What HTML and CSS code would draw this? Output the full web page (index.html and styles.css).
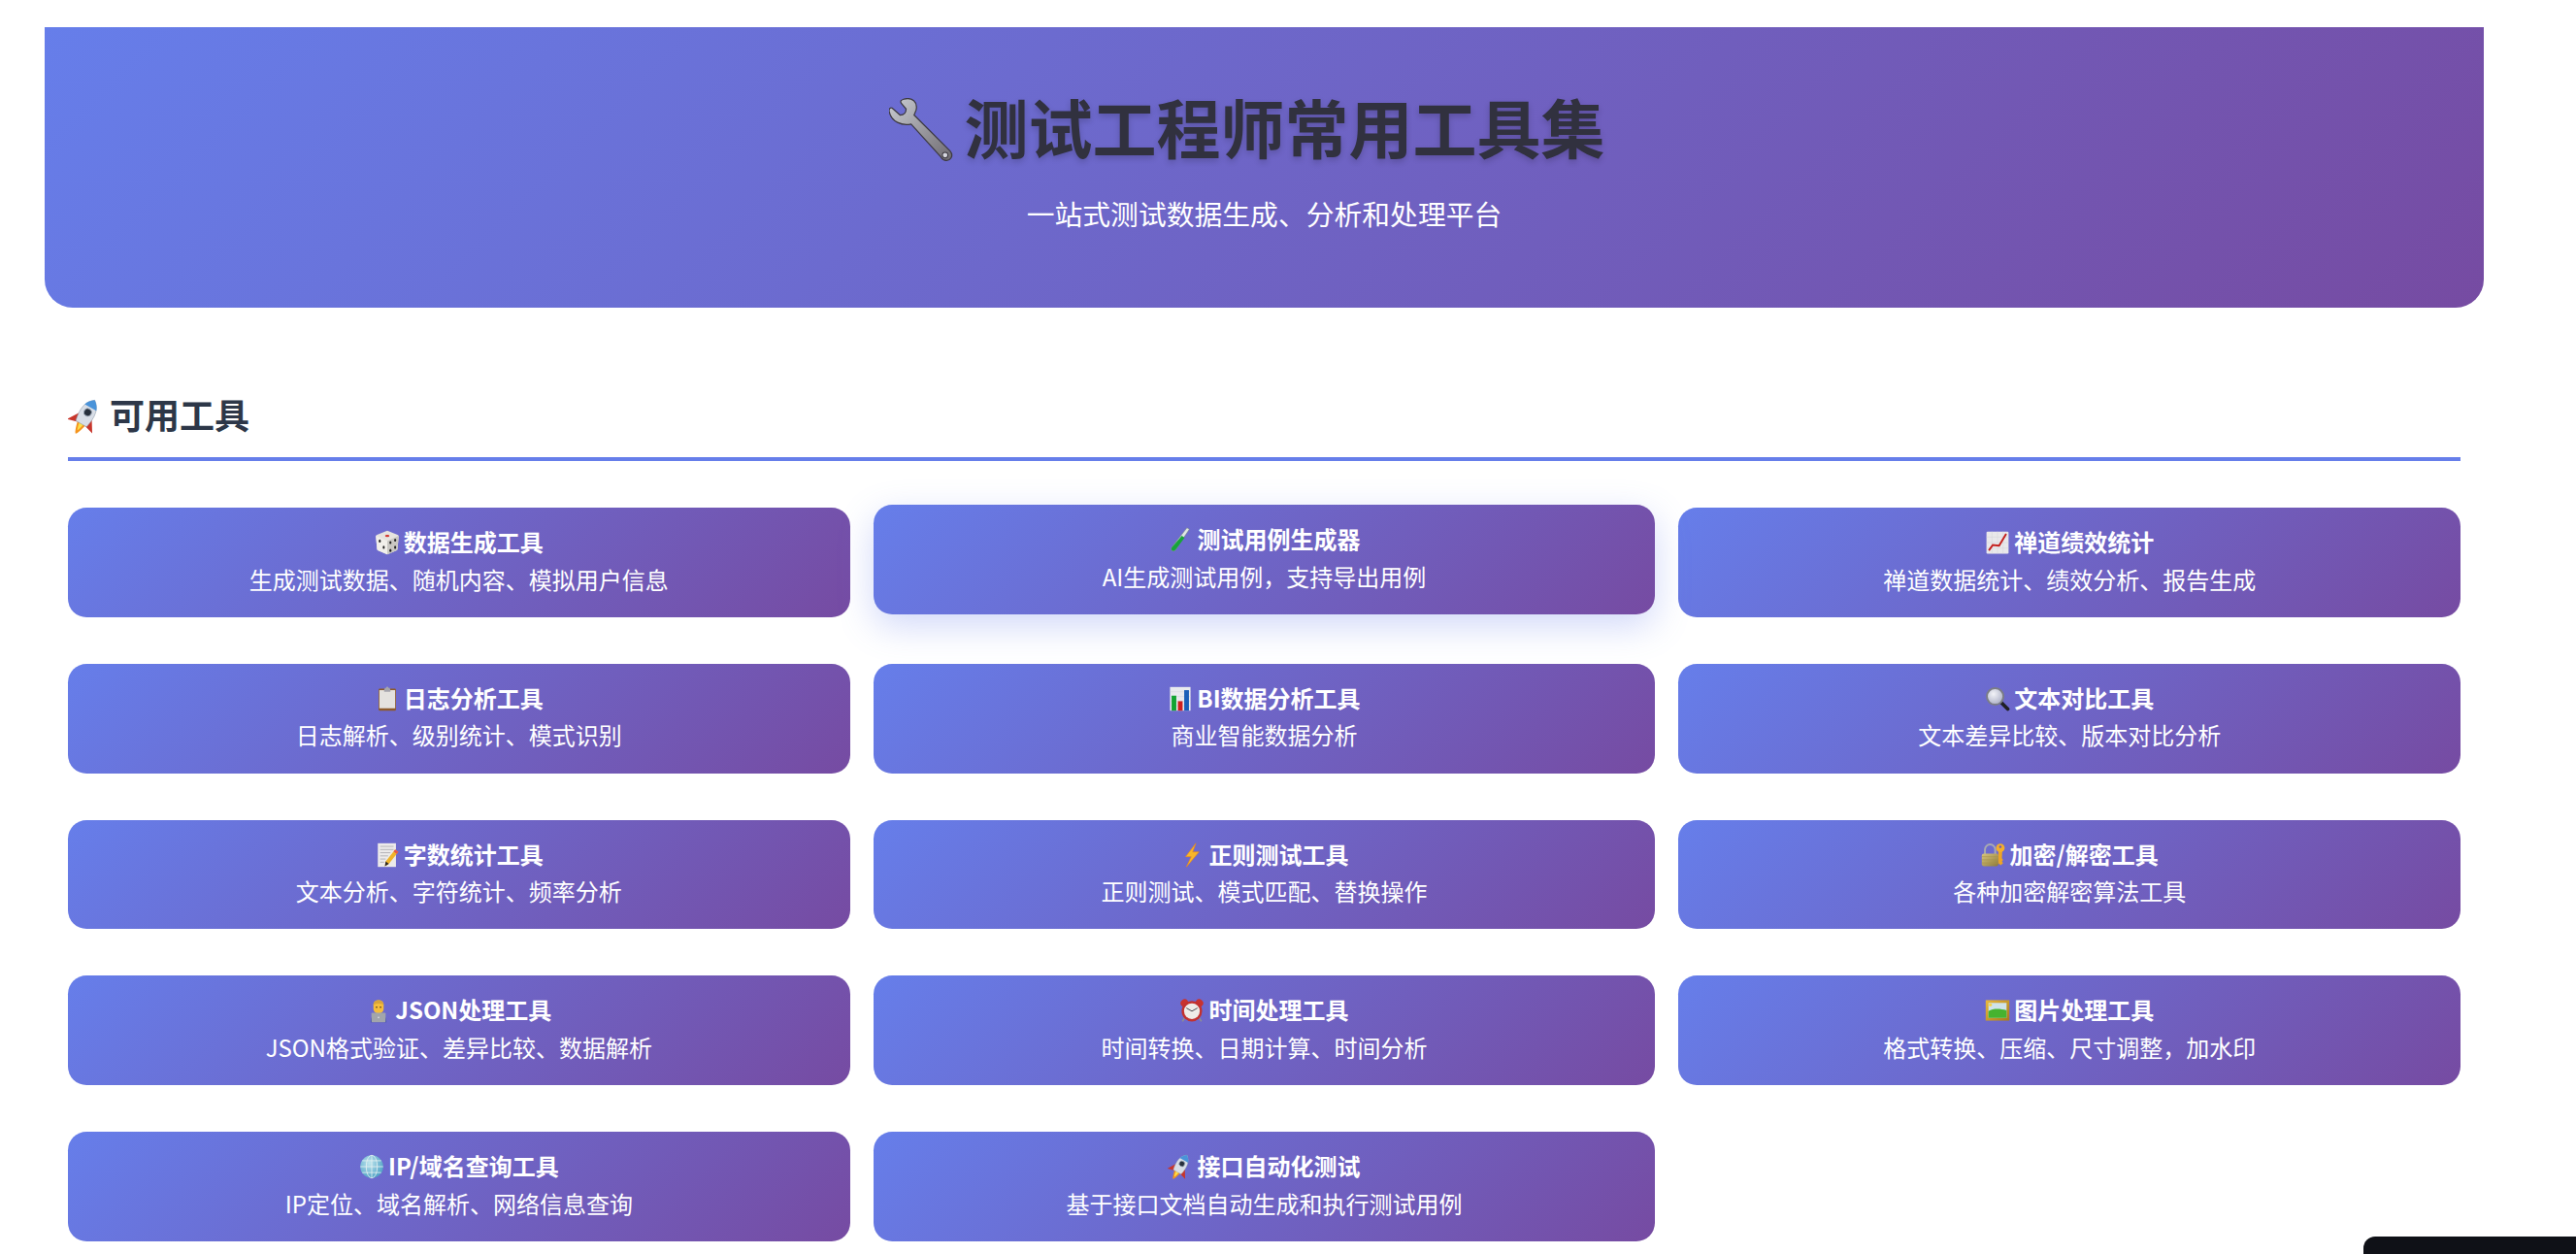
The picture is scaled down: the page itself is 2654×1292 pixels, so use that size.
FILE: index.html
```html
<!DOCTYPE html>
<html lang="zh-CN">
<head>
    <meta charset="UTF-8">
    <title>测试工程师常用工具集</title>
    <link rel="stylesheet" href="styles.css">
</head>
<body>

<!-- emoji drawings -->
<svg class="icon-defs" xmlns="http://www.w3.org/2000/svg">
    <defs>
        <linearGradient id="steel" x1="0" y1="0" x2="1" y2="1">
            <stop offset="0" stop-color="#c9ccd2"/>
            <stop offset="1" stop-color="#6e6a70"/>
        </linearGradient>
        <linearGradient id="brass" x1="0" y1="0" x2="1" y2="1">
            <stop offset="0" stop-color="#d9c77c"/>
            <stop offset="1" stop-color="#8d7a3a"/>
        </linearGradient>
        <linearGradient id="frame" x1="0" y1="0" x2="1" y2="1">
            <stop offset="0" stop-color="#e9b93c"/>
            <stop offset="1" stop-color="#a87a1c"/>
        </linearGradient>
        <radialGradient id="glass" cx="0.4" cy="0.35" r="0.7">
            <stop offset="0" stop-color="#f2f3f7"/>
            <stop offset="1" stop-color="#a9adc4"/>
        </radialGradient>
        <radialGradient id="earth" cx="0.4" cy="0.35" r="0.7">
            <stop offset="0" stop-color="#bfe6ee"/>
            <stop offset="1" stop-color="#4b9fc4"/>
        </radialGradient>
    </defs>

    <symbol id="ic-wrench" viewBox="0 0 64 64">
        <path d="M15 1 C23 -1 29 4 27 12 L25 17 L61 53 C65 58 61 64 55 62 C53 61 52 60 51 58 L22 26 C13 28 2 24 0 13 C0 11 1 9 3 10 L11 17 C15 17 17 15 17 11 L12 5 C11 3 12 2 15 1 Z" fill="url(#steel)" stroke="#3d3a42" stroke-width="1.2"/>
        <circle cx="56" cy="57" r="2.8" fill="#d5d6de" stroke="#3d3a42"/>
    </symbol>

    <symbol id="ic-rocket" viewBox="0 0 32 32">
        <g transform="rotate(30 16 16) translate(16 16.500) scale(.88 .86) translate(-16 -16.500)">
            <path d="M9.500 14 L1 28 L11.500 25 Z M22.500 14 L31 28 L20.500 25 Z" fill="#c8352b"/>
            <path d="M11 23 Q14 36 16 37 Q18 36 21 23 Z" fill="#f5941d"/>
            <path d="M13.500 24 Q15 32 16 33 Q17 32 18.500 24 Z" fill="#fbe04a"/>
            <path d="M16 -4 C24 2 25.500 11 22.500 25 H9.500 C6.500 11 8 2 16 -4 Z" fill="#d8dee7" stroke="#8b97a6" stroke-width=".5"/>
            <path d="M16 -4 C19.500 -1.500 21.800 1.500 23 5 H9 C10.200 1.500 12.500 -1.500 16 -4 Z" fill="#4a93d9"/>
            <circle cx="16" cy="11" r="4" fill="#27303c" stroke="#9aa6b5" stroke-width="1"/>
        </g>
    </symbol>

    <symbol id="ic-dice" viewBox="0 0 32 32">
        <path d="M16 1 L29 6 C30 6.500 30.500 7 30.500 8 L29 24 C29 25 28.500 25.500 27.500 26 L16 31 L4.500 26 C3.500 25.500 3 25 3 24 L1.500 8 C1.500 7 2 6.500 3 6 Z" fill="#e6e4df"/>
        <path d="M16 14 L30.500 7.500 L29 24 C29 25 28.500 25.500 27.500 26 L16 31 Z" fill="#c9c7c2"/>
        <path d="M16 14 L1.500 7.500 L3 24 C3 25 3.500 25.500 4.500 26 L16 31 Z" fill="#f1efea"/>
        <ellipse cx="16" cy="7.500" rx="2.800" ry="1.500" fill="#d3332c"/>
        <g fill="#222">
            <ellipse cx="6.500" cy="14" rx="1.300" ry="1.900"/>
            <ellipse cx="11.500" cy="22" rx="1.300" ry="1.900"/>
            <ellipse cx="20" cy="16" rx="1.300" ry="1.900"/>
            <ellipse cx="26" cy="13" rx="1.300" ry="1.900"/>
            <ellipse cx="20" cy="26" rx="1.300" ry="1.900"/>
            <ellipse cx="26" cy="22" rx="1.300" ry="1.900"/>
        </g>
    </symbol>

    <symbol id="ic-tube" viewBox="0 0 32 32">
        <path d="M24.500 1 L27.500 2.800 L10 29 C8.500 31 5.500 30.500 5 29 C4.500 28 4.500 27 5.500 25.500 Z" fill="#dfe7e4" stroke="#76877f" stroke-width=".7"/>
        <path d="M18 11 L21.500 13.500 L10 29 C8.500 31 5.500 30.500 5 29 C4.500 28 4.500 27 5.500 25.500 Z" fill="#17a33a"/>
    </symbol>

    <symbol id="ic-trend" viewBox="0 0 32 32">
        <rect x="2" y="2" width="28" height="28" rx="1.500" fill="#e9e8ea"/>
        <path d="M2 9 H30 M2 16 H30 M2 23 H30 M9 2 V30 M16 2 V30 M23 2 V30" stroke="#d3d3da" stroke-width=".6"/>
        <path d="M5 26 L10 19 L18 20 L27 5" fill="none" stroke="#c4201d" stroke-width="2.400"/>
    </symbol>

    <symbol id="ic-clipboard" viewBox="0 0 32 32">
        <rect x="5" y="3" width="22" height="28" rx="1.500" fill="#8d5a2b"/>
        <rect x="6" y="5" width="20" height="23" fill="#e4e2de"/>
        <path d="M12 5 L13 2 H14.500 A1.500 1.500 0 0 1 17.500 2 H19 L20 5 V7 H12 Z" fill="#a5a5ad"/>
    </symbol>

    <symbol id="ic-bars" viewBox="0 0 32 32">
        <rect x="3" y="1" width="26" height="30" fill="#e8eaee"/>
        <path d="M3 7 H29 M3 13 H29 M3 19 H29 M3 25 H29" stroke="#cfd2da" stroke-width=".6"/>
        <rect x="5" y="12" width="6" height="19" fill="#12a332"/>
        <rect x="13" y="19" width="6" height="12" fill="#cf1f1d"/>
        <rect x="21" y="5" width="6" height="26" fill="#1a5fb8"/>
    </symbol>

    <symbol id="ic-magnifier" viewBox="0 0 32 32">
        <path d="M20 20 L29 29" stroke="#1f1f24" stroke-width="4.500" stroke-linecap="round"/>
        <circle cx="13" cy="13" r="10.500" fill="url(#glass)" stroke="#7b7d86" stroke-width="2.400"/>
    </symbol>

    <symbol id="ic-memo" viewBox="0 0 32 32">
        <rect x="4" y="1" width="23" height="30" fill="#eceaea"/>
        <path d="M7 5 H24 M7 9 H24 M7 13 H20 M7 17 H17 M7 21 H14 M7 25 H12" stroke="#a8a8ac" stroke-width="1"/>
        <path d="M26 9 L30 12 L18 27 L13 30 L14 24 Z" fill="#f0b429"/>
        <path d="M26 9 L30 12 L28 14.500 L24 11.500 Z" fill="#e2564f"/>
        <path d="M14 24 L18 27 L13 30 Z" fill="#2b2622"/>
    </symbol>

    <symbol id="ic-bolt" viewBox="0 0 32 32">
        <path d="M21 1 L8 18 L15 18 L9 31 L25 12 L17 12 Z" fill="#f8b62a" stroke="#e7861c" stroke-width=".8"/>
    </symbol>

    <symbol id="ic-lock" viewBox="0 0 32 32">
        <path d="M5 15 V9 A6.500 6.500 0 0 1 18 9 V15" fill="none" stroke="#a9abb0" stroke-width="2.400"/>
        <rect x="1" y="14" width="21" height="16" rx="2.500" fill="url(#brass)"/>
        <path d="M1 18 H22 M1 22 H22 M1 26 H22" stroke="#a6914a" stroke-width=".7"/>
        <path d="M22 10 V26 L25 29 L28 26 L26.500 24 L28 22 L26.500 20 L27 10 Z" fill="#eda425"/>
        <circle cx="24.500" cy="7" r="5.500" fill="#f3ae2c"/>
        <circle cx="24.500" cy="5.500" r="1.500" fill="#6b5bb6"/>
    </symbol>

    <symbol id="ic-coder" viewBox="0 0 32 32">
        <path d="M6 31 C6 23 10 20 16 20 C22 20 26 23 26 31 Z" fill="#3b49a8"/>
        <rect x="9.500" y="3" width="13" height="17" rx="6" fill="#f5bd3c"/>
        <path d="M9.500 9 C9.500 1 22.500 1 22.500 9 C19 7 13 7 9.500 9 Z" fill="#d8a53a"/>
        <circle cx="13.500" cy="12" r="1" fill="#3b2a14"/>
        <circle cx="18.500" cy="12" r="1" fill="#3b2a14"/>
        <rect x="7" y="19" width="18" height="12" rx="1" fill="#a2a5ab"/>
        <circle cx="16" cy="25" r="1" fill="#e6e7ea"/>
    </symbol>

    <symbol id="ic-clock" viewBox="0 0 32 32">
        <path d="M7 25 L4 30 M25 25 L28 30" stroke="#8e8e92" stroke-width="2"/>
        <ellipse cx="6.500" cy="6.500" rx="5" ry="4.500" fill="#c8322f" transform="rotate(-40 6.500 6.500)"/>
        <ellipse cx="25.500" cy="6.500" rx="5" ry="4.500" fill="#c8322f" transform="rotate(40 25.500 6.500)"/>
        <circle cx="16" cy="17" r="13" fill="#c2312f"/>
        <circle cx="16" cy="17" r="10" fill="#efece8"/>
        <path d="M16 17 L9 13 M16 17 L23 13" stroke="#45454a" stroke-width="1.200"/>
    </symbol>

    <symbol id="ic-picture" viewBox="0 0 32 32">
        <rect x="1" y="3" width="30" height="26" fill="url(#frame)"/>
        <rect x="4.500" y="6.500" width="23" height="19" fill="#cfe3ea"/>
        <path d="M4.500 17 C11 13 20 14 27.500 16 V25.500 H4.500 Z" fill="#46b32f"/>
        <circle cx="7" cy="9" r="2" fill="#f6d34a"/>
    </symbol>

    <symbol id="ic-globe" viewBox="0 0 32 32">
        <circle cx="16" cy="16" r="14.500" fill="url(#earth)"/>
        <path d="M16 1.500 V30.500 M1.500 16 H30.500 M4 8.500 H28 M4 23.500 H28" stroke="#e6f1f2" stroke-width="1" fill="none"/>
        <ellipse cx="16" cy="16" rx="7" ry="14.500" stroke="#e6f1f2" stroke-width="1" fill="none"/>
    </symbol>
</svg>

<div class="page">
    <header class="hero">
        <h1><svg class="hero-icon"><use href="#ic-wrench"/></svg>测试工程师常用工具集</h1>
        <p>一站式测试数据生成、分析和处理平台</p>
    </header>

    <section class="tools">
        <h2><svg class="section-icon"><use href="#ic-rocket"/></svg>可用工具</h2>

        <div class="tool-grid">
            <a class="tool-card" href="#">
                <div class="tool-name"><svg class="emoji"><use href="#ic-dice"/></svg>数据生成工具</div>
                <div class="tool-desc">生成测试数据、随机内容、模拟用户信息</div>
            </a>
            <a class="tool-card is-hover" href="#">
                <div class="tool-name"><svg class="emoji"><use href="#ic-tube"/></svg>测试用例生成器</div>
                <div class="tool-desc">AI生成测试用例，支持导出用例</div>
            </a>
            <a class="tool-card" href="#">
                <div class="tool-name"><svg class="emoji"><use href="#ic-trend"/></svg>禅道绩效统计</div>
                <div class="tool-desc">禅道数据统计、绩效分析、报告生成</div>
            </a>
            <a class="tool-card" href="#">
                <div class="tool-name"><svg class="emoji"><use href="#ic-clipboard"/></svg>日志分析工具</div>
                <div class="tool-desc">日志解析、级别统计、模式识别</div>
            </a>
            <a class="tool-card" href="#">
                <div class="tool-name"><svg class="emoji"><use href="#ic-bars"/></svg>BI数据分析工具</div>
                <div class="tool-desc">商业智能数据分析</div>
            </a>
            <a class="tool-card" href="#">
                <div class="tool-name"><svg class="emoji"><use href="#ic-magnifier"/></svg>文本对比工具</div>
                <div class="tool-desc">文本差异比较、版本对比分析</div>
            </a>
            <a class="tool-card" href="#">
                <div class="tool-name"><svg class="emoji"><use href="#ic-memo"/></svg>字数统计工具</div>
                <div class="tool-desc">文本分析、字符统计、频率分析</div>
            </a>
            <a class="tool-card" href="#">
                <div class="tool-name"><svg class="emoji"><use href="#ic-bolt"/></svg>正则测试工具</div>
                <div class="tool-desc">正则测试、模式匹配、替换操作</div>
            </a>
            <a class="tool-card" href="#">
                <div class="tool-name"><svg class="emoji"><use href="#ic-lock"/></svg>加密/解密工具</div>
                <div class="tool-desc">各种加密解密算法工具</div>
            </a>
            <a class="tool-card" href="#">
                <div class="tool-name"><svg class="emoji"><use href="#ic-coder"/></svg>JSON处理工具</div>
                <div class="tool-desc">JSON格式验证、差异比较、数据解析</div>
            </a>
            <a class="tool-card" href="#">
                <div class="tool-name"><svg class="emoji"><use href="#ic-clock"/></svg>时间处理工具</div>
                <div class="tool-desc">时间转换、日期计算、时间分析</div>
            </a>
            <a class="tool-card" href="#">
                <div class="tool-name"><svg class="emoji"><use href="#ic-picture"/></svg>图片处理工具</div>
                <div class="tool-desc">格式转换、压缩、尺寸调整，加水印</div>
            </a>
            <a class="tool-card" href="#">
                <div class="tool-name"><svg class="emoji"><use href="#ic-globe"/></svg>IP/域名查询工具</div>
                <div class="tool-desc">IP定位、域名解析、网络信息查询</div>
            </a>
            <a class="tool-card" href="#">
                <div class="tool-name"><svg class="emoji"><use href="#ic-rocket"/></svg>接口自动化测试</div>
                <div class="tool-desc">基于接口文档自动生成和执行测试用例</div>
            </a>
        </div>
    </section>
</div>

<div class="dock"></div>

</body>
</html>
```

FILE: styles.css
```css
/* General Styling */
* {
    box-sizing: border-box;
    margin: 0;
    padding: 0;
}

body {
    font-family: "Noto Sans CJK SC", "Noto Sans", sans-serif;
    background: #fff;
    color: #2d3748;
    line-height: 1.6;
}

.icon-defs {
    position: absolute;
    width: 0;
    height: 0;
}

.page {
    padding: 28px 95px 0 46px;
}

/* Header */
.hero {
    padding: 49px 24px 74px;
    background: linear-gradient(135deg, #667eea, #764ba2);
    border-radius: 0 0 29px 29px;
    text-align: center;
}

.hero h1 {
    padding-right: 36px;
    font-size: 66px;
    font-weight: 700;
    color: #31313f;
    text-shadow: 0 3px 6px rgba(0, 0, 0, 0.18);
}

.hero-icon {
    width: 66px;
    height: 66px;
    margin-right: 12px;
    vertical-align: -9px;
}

.hero p {
    margin-top: 14.5px;
    font-size: 28.8px;
    color: #fff;
}

/* Tools */
.tools {
    margin-top: 81px;
    padding: 0 24px;
}

.tools h2 {
    padding-bottom: 15.4px;
    border-bottom: 4px solid #667eea;
    font-size: 36px;
    font-weight: 700;
    color: #2d3748;
}

.section-icon {
    width: 36px;
    height: 36px;
    margin-right: 7px;
    vertical-align: -5px;
}

.tool-grid {
    display: grid;
    grid-template-columns: repeat(3, 1fr);
    gap: 48px 24px;
    margin-top: 48px;
}

.tool-card {
    display: block;
    padding: 16px 24px 20px;
    background: linear-gradient(135deg, #667eea, #764ba2);
    border-radius: 19.2px;
    color: #fff;
    font-size: 24px;
    text-align: center;
    text-decoration: none;
}

.tool-card.is-hover {
    transform: translateY(-3px);
    box-shadow: 0 12px 36px rgba(102, 126, 234, 0.3);
}

.tool-name {
    font-weight: 700;
}

.tool-desc {
    color: #fff;
}

.emoji {
    width: 26px;
    height: 26px;
    margin-right: 4px;
    vertical-align: -4px;
}

/* Bottom corner panel */
.dock {
    position: fixed;
    right: 0;
    bottom: 0;
    width: 219px;
    height: 18px;
    background: #0f1117;
    border-radius: 12px 0 0 0;
}
```
